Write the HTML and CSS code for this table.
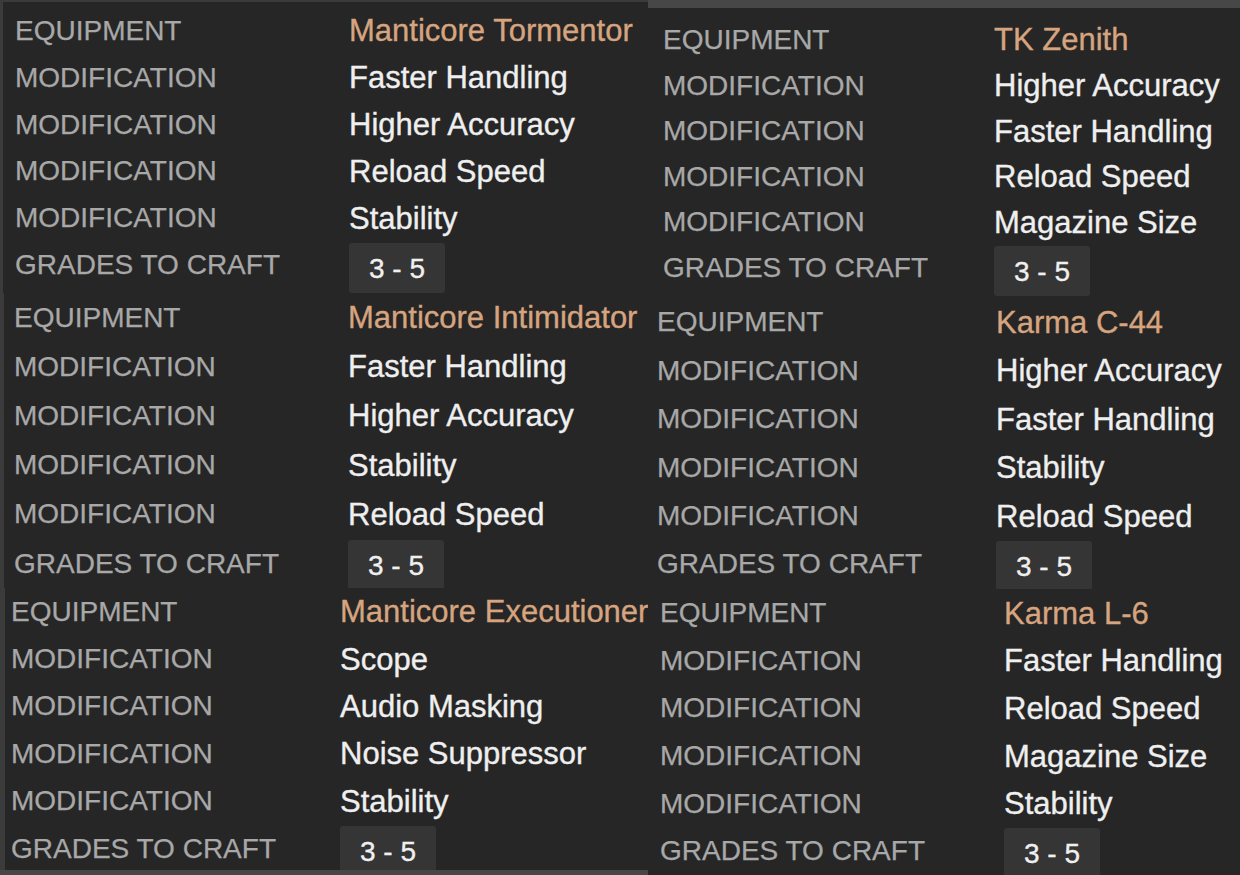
FILE: index.html
```html
<!DOCTYPE html>
<html lang="en">
<head>
<meta charset="utf-8">
<title>Crafting modifications</title>
<link rel="stylesheet" href="styles.css">
</head>
<body>
<main class="board">
  <div class="col col-left">
    <section class="panel p1">
      <span class="lbl">EQUIPMENT</span><span class="val name">Manticore Tormentor</span>
      <span class="lbl">MODIFICATION</span><span class="val">Faster Handling</span>
      <span class="lbl">MODIFICATION</span><span class="val">Higher Accuracy</span>
      <span class="lbl">MODIFICATION</span><span class="val">Reload Speed</span>
      <span class="lbl">MODIFICATION</span><span class="val">Stability</span>
      <span class="lbl">GRADES TO CRAFT</span><span class="val"><span class="chip">3 - 5</span></span>
    </section>
    <section class="panel p3">
      <span class="lbl">EQUIPMENT</span><span class="val name">Manticore Intimidator</span>
      <span class="lbl">MODIFICATION</span><span class="val">Faster Handling</span>
      <span class="lbl">MODIFICATION</span><span class="val">Higher Accuracy</span>
      <span class="lbl">MODIFICATION</span><span class="val">Stability</span>
      <span class="lbl">MODIFICATION</span><span class="val">Reload Speed</span>
      <span class="lbl">GRADES TO CRAFT</span><span class="val"><span class="chip">3 - 5</span></span>
    </section>
    <section class="panel p5">
      <span class="lbl">EQUIPMENT</span><span class="val name">Manticore Executioner</span>
      <span class="lbl">MODIFICATION</span><span class="val">Scope</span>
      <span class="lbl">MODIFICATION</span><span class="val">Audio Masking</span>
      <span class="lbl">MODIFICATION</span><span class="val">Noise Suppressor</span>
      <span class="lbl">MODIFICATION</span><span class="val">Stability</span>
      <span class="lbl">GRADES TO CRAFT</span><span class="val"><span class="chip">3 - 5</span></span>
    </section>
  </div>
  <div class="col col-right">
    <section class="panel p2">
      <span class="lbl">EQUIPMENT</span><span class="val name">TK Zenith</span>
      <span class="lbl">MODIFICATION</span><span class="val">Higher Accuracy</span>
      <span class="lbl">MODIFICATION</span><span class="val">Faster Handling</span>
      <span class="lbl">MODIFICATION</span><span class="val">Reload Speed</span>
      <span class="lbl">MODIFICATION</span><span class="val">Magazine Size</span>
      <span class="lbl">GRADES TO CRAFT</span><span class="val"><span class="chip">3 - 5</span></span>
    </section>
    <section class="panel p4">
      <span class="lbl">EQUIPMENT</span><span class="val name">Karma C-44</span>
      <span class="lbl">MODIFICATION</span><span class="val">Higher Accuracy</span>
      <span class="lbl">MODIFICATION</span><span class="val">Faster Handling</span>
      <span class="lbl">MODIFICATION</span><span class="val">Stability</span>
      <span class="lbl">MODIFICATION</span><span class="val">Reload Speed</span>
      <span class="lbl">GRADES TO CRAFT</span><span class="val"><span class="chip">3 - 5</span></span>
    </section>
    <section class="panel p6">
      <span class="lbl">EQUIPMENT</span><span class="val name">Karma L-6</span>
      <span class="lbl">MODIFICATION</span><span class="val">Faster Handling</span>
      <span class="lbl">MODIFICATION</span><span class="val">Reload Speed</span>
      <span class="lbl">MODIFICATION</span><span class="val">Magazine Size</span>
      <span class="lbl">MODIFICATION</span><span class="val">Stability</span>
      <span class="lbl">GRADES TO CRAFT</span><span class="val"><span class="chip">3 - 5</span></span>
    </section>
  </div>
</main>
</body>
</html>
```
FILE: styles.css
```css
html, body {
  margin: 0;
  padding: 0;
}

body {
  background: #474747;
  font-family: "Liberation Sans", Arial, Helvetica, sans-serif;
  width: 1240px;
  height: 875px;
  overflow: hidden;
}

.board {
  display: flex;
  width: 1240px;
  height: 875px;
}

.col {
  display: flex;
  flex-direction: column;
}

.col-left {
  width: 648px;
}

.col-right {
  flex: 1;
  padding-top: 8px;
}

.panel {
  background: #262626;
  display: grid;
  grid-template-columns: var(--lw) 1fr;
  grid-auto-rows: var(--row);
  align-items: center;
  overflow: hidden;
  box-sizing: border-box;
}

.lbl {
  color: #a8a8a8;
  font-size: 28px;
  white-space: nowrap;
  line-height: 1;
  -webkit-text-stroke: 0.25px currentColor;
}

.val {
  color: #efefef;
  font-size: 31px;
  white-space: nowrap;
  line-height: 1;
  align-self: stretch;
  display: flex;
  align-items: center;
  -webkit-text-stroke: 0.35px currentColor;
}

.val.name {
  color: #d6a47f;
}

.chip {
  align-self: flex-start;
  margin-top: 1px;
  height: 50px;
  line-height: 52px;
  padding: 0 20px;
  background: #353535;
  border-radius: 3px;
  font-size: 28px;
  color: #f0f0f0;
}

/* individual crops */
.p1 {
  --lw: 334px;
  --row: 46.8px;
  height: 293px;
  border-top: 2px solid #3b3b3b;
  border-left: 3px solid #3b3b3b;
  padding: 5.6px 0 0 12px;
}

.p3 {
  --lw: 334px;
  --row: 49.2px;
  height: 295px;
  border-left: 4px solid #3b3b3b;
  padding: 0 0 0 10px;
}

.p5 {
  --lw: 329px;
  --row: 47.4px;
  height: 282px;
  border-left: 5px solid #3b3b3b;
  padding: 0 0 0 6px;
}

.p2 {
  --lw: 331px;
  --row: 45.6px;
  height: 288px;
  padding: 9.2px 0 0 15px;
}

.p4 {
  --lw: 339px;
  --row: 48.4px;
  height: 293px;
  padding: 2.3px 0 0 9px;
}

.p6 {
  --lw: 344px;
  --row: 47.6px;
  height: 286px;
  padding: 0.5px 0 0 12px;
}
```
